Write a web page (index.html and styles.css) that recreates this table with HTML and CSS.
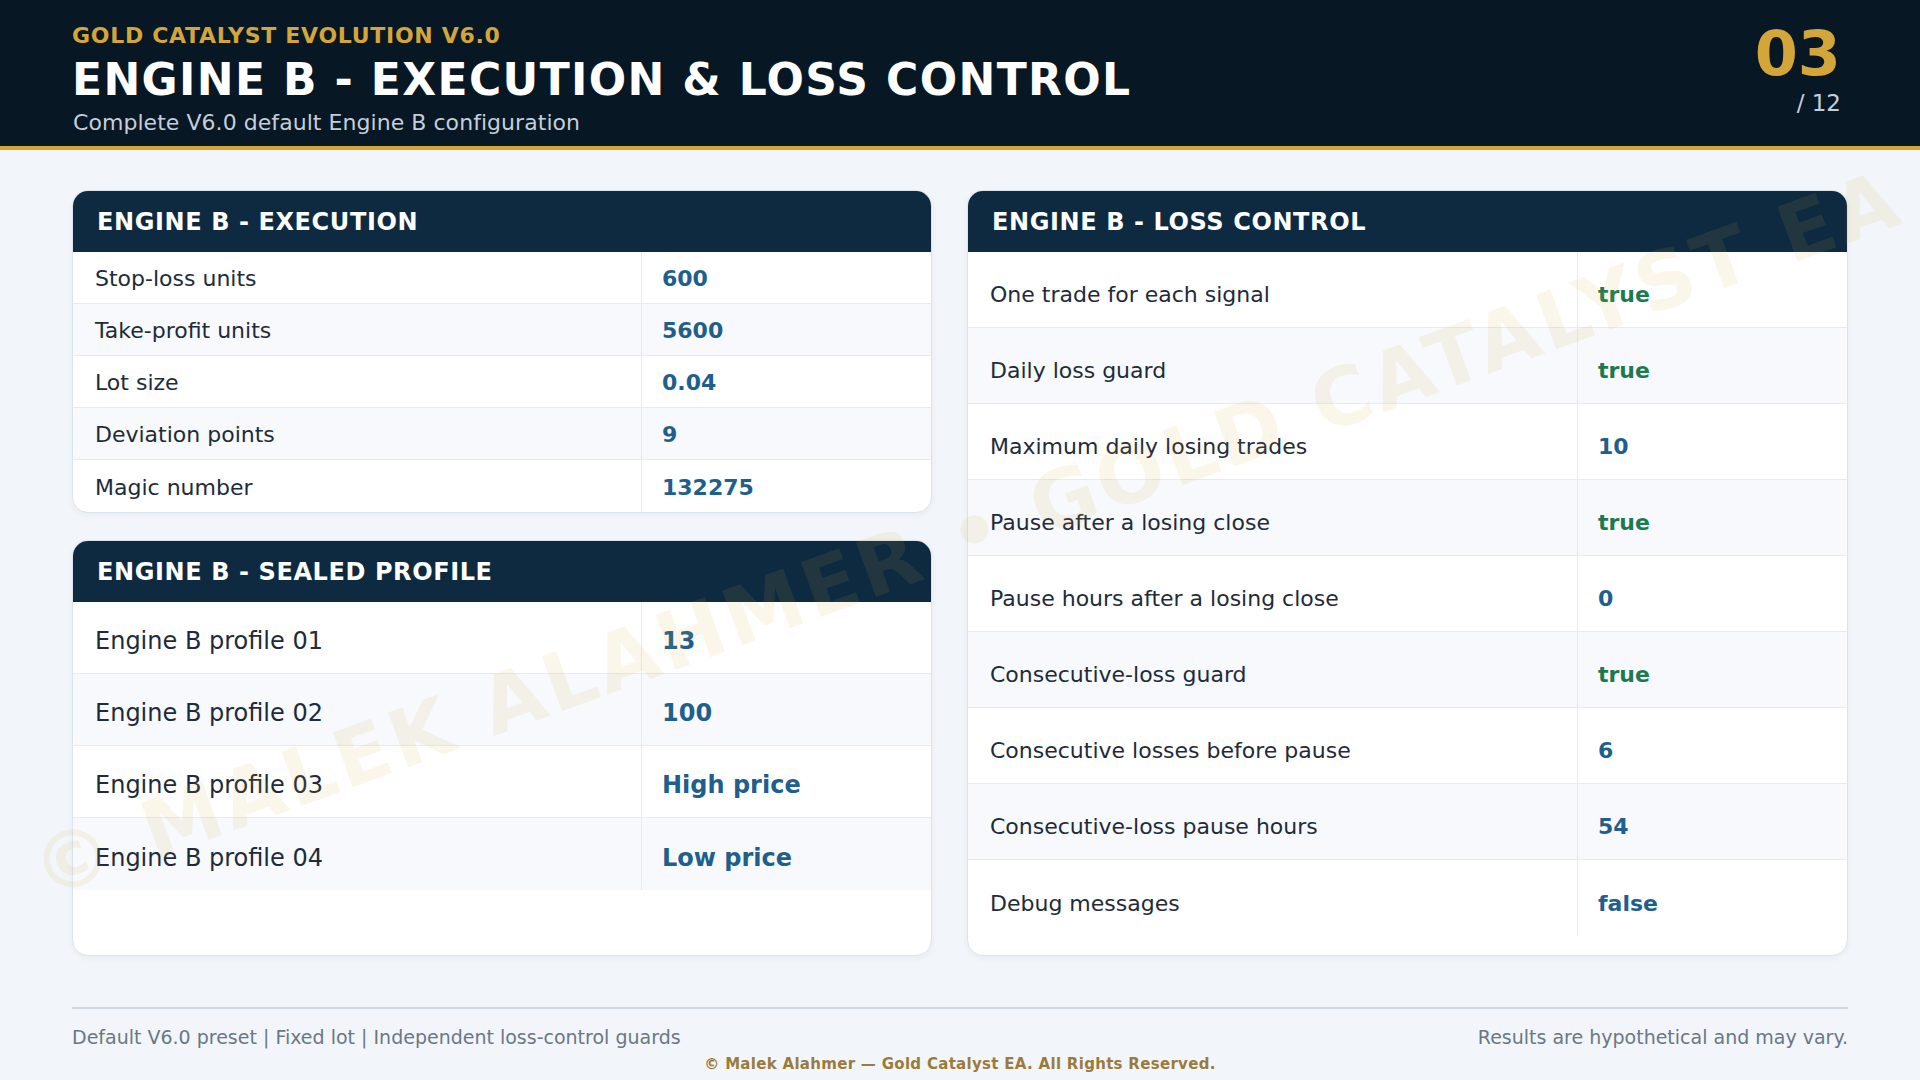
FILE: index.html
```html
<!DOCTYPE html>
<html lang="en">
<head>
<meta charset="utf-8">
<title>Engine B - Execution &amp; Loss Control</title>
<link rel="stylesheet" href="styles.css">
</head>
<body>
<header class="top">
  <div class="titles">
    <div class="eyebrow">GOLD CATALYST EVOLUTION V6.0</div>
    <h1 class="title">ENGINE B - EXECUTION &amp; LOSS CONTROL</h1>
    <div class="subtitle">Complete V6.0 default Engine B configuration</div>
  </div>
  <div class="pager">
    <div class="page-num">03</div>
    <div class="page-total">/ 12</div>
  </div>
</header>

<main class="grid">
  <div class="col">
    <section class="card">
      <h2 class="card-head">ENGINE B - EXECUTION</h2>
      <div class="rows rows-exec">
        <div class="row"><span class="k">Stop-loss units</span><span class="v">600</span></div>
        <div class="row"><span class="k">Take-profit units</span><span class="v">5600</span></div>
        <div class="row"><span class="k">Lot size</span><span class="v">0.04</span></div>
        <div class="row"><span class="k">Deviation points</span><span class="v">9</span></div>
        <div class="row"><span class="k">Magic number</span><span class="v">132275</span></div>
      </div>
    </section>
    <section class="card card-fill">
      <h2 class="card-head">ENGINE B - SEALED PROFILE</h2>
      <div class="rows rows-profile">
        <div class="row"><span class="k">Engine B profile 01</span><span class="v">13</span></div>
        <div class="row"><span class="k">Engine B profile 02</span><span class="v">100</span></div>
        <div class="row"><span class="k">Engine B profile 03</span><span class="v">High price</span></div>
        <div class="row"><span class="k">Engine B profile 04</span><span class="v">Low price</span></div>
      </div>
    </section>
  </div>

  <section class="card">
    <h2 class="card-head">ENGINE B - LOSS CONTROL</h2>
    <div class="rows rows-loss">
      <div class="row"><span class="k">One trade for each signal</span><span class="v v-true">true</span></div>
      <div class="row"><span class="k">Daily loss guard</span><span class="v v-true">true</span></div>
      <div class="row"><span class="k">Maximum daily losing trades</span><span class="v">10</span></div>
      <div class="row"><span class="k">Pause after a losing close</span><span class="v v-true">true</span></div>
      <div class="row"><span class="k">Pause hours after a losing close</span><span class="v">0</span></div>
      <div class="row"><span class="k">Consecutive-loss guard</span><span class="v v-true">true</span></div>
      <div class="row"><span class="k">Consecutive losses before pause</span><span class="v">6</span></div>
      <div class="row"><span class="k">Consecutive-loss pause hours</span><span class="v">54</span></div>
      <div class="row"><span class="k">Debug messages</span><span class="v">false</span></div>
    </div>
  </section>
</main>

<footer class="foot">
  <div class="foot-row">
    <span>Default V6.0 preset | Fixed lot | Independent loss-control guards</span>
    <span>Results are hypothetical and may vary.</span>
  </div>
  <div class="copyright">© Malek Alahmer — Gold Catalyst EA. All Rights Reserved.</div>
</footer>

<div class="watermark">© MALEK ALAHMER • GOLD CATALYST EA</div>
</body>
</html>
```

FILE: styles.css
```css
* { box-sizing: border-box; }

html, body {
  margin: 0;
  padding: 0;
}

body {
  width: 1920px;
  height: 1080px;
  overflow: hidden;
  background: #f2f6fa;
  font-family: "DejaVu Sans", "Noto Sans", sans-serif;
  color: #1e2b3a;
  position: relative;
}

/* ---------- top header ---------- */
.top {
  height: 150px;
  background: #071724;
  border-bottom: 4px solid #d4a63a;
  display: flex;
  justify-content: space-between;
  padding: 0 79px 0 72px;
}

.titles {
  padding-top: 23px;
}

.eyebrow {
  font-size: 22px;
  line-height: 26px;
  font-weight: bold;
  color: #d4a63a;
  letter-spacing: 0.7px;
  margin-bottom: 5px;
}

.title {
  margin: 0;
  font-size: 44px;
  line-height: 52px;
  font-weight: bold;
  color: #ffffff;
  letter-spacing: 1.35px;
}

.subtitle {
  margin-top: 4px;
  font-size: 22px;
  line-height: 26px;
  color: #c5ced9;
  letter-spacing: 0.05px;
  padding-left: 1px;
}

.pager {
  padding-top: 23px;
  display: flex;
  flex-direction: column;
  align-items: flex-end;
}

.page-num {
  font-size: 62px;
  line-height: 62px;
  font-weight: bold;
  color: #d4a63a;
}

.page-total {
  margin-top: 5px;
  font-size: 23px;
  line-height: 26px;
  color: #c5ced9;
}

/* ---------- grid ---------- */
.grid {
  display: grid;
  grid-template-columns: 860px 1fr;
  column-gap: 35px;
  height: 806px;
  padding: 40px 72px 0;
}

.col {
  display: flex;
  flex-direction: column;
  gap: 27px;
}

.card {
  background: #ffffff;
  border: 1px solid #dbe3ec;
  border-radius: 16px;
  overflow: hidden;
  box-shadow: 0 2px 6px rgba(15, 40, 70, 0.05);
}

.card-fill {
  flex: 1;
}

.card-head {
  margin: 0;
  height: 61px;
  display: flex;
  align-items: center;
  padding: 0 24px;
  background: #0d2a40;
  color: #ffffff;
  font-size: 24px;
  font-weight: bold;
  letter-spacing: 0.6px;
}

.row {
  display: grid;
  border-bottom: 1px solid #e5ebf2;
}

.row:nth-child(even) {
  background: #f7f9fc;
}

.row:last-child {
  border-bottom: none;
}

.k, .v {
  display: flex;
  align-items: center;
}

.k {
  padding: 0 22px;
  border-right: 1px solid #e5ebf2;
  color: #1e2b3a;
}

.v {
  padding: 0 20px;
  font-weight: bold;
  color: #1f5f8d;
}

.v-true {
  color: #1d7a50;
}

.rows-exec .row {
  grid-template-columns: 569px 1fr;
  height: 52px;
  font-size: 22px;
}

.rows-exec .k,
.rows-exec .v {
  padding-top: 2px;
}

.rows-profile .row {
  grid-template-columns: 569px 1fr;
  height: 72px;
  font-size: 24px;
}

.rows-profile .k,
.rows-profile .v {
  padding-top: 7px;
}

.rows-loss .row {
  grid-template-columns: 610px 1fr;
  height: 76px;
  font-size: 22px;
}

.rows-loss .k,
.rows-loss .v {
  padding-top: 10px;
}

/* ---------- footer ---------- */
.foot {
  margin: 51px 72px 0;
  border-top: 2px solid #d0d9e3;
}

.foot-row {
  display: flex;
  justify-content: space-between;
  padding-top: 17px;
  font-size: 19px;
  line-height: 22px;
  color: #6b7785;
}

.copyright {
  margin-top: 7px;
  text-align: center;
  font-size: 15px;
  line-height: 18px;
  font-weight: bold;
  letter-spacing: 0.3px;
  color: #9b7b3b;
}

/* ---------- watermark ---------- */
.watermark {
  position: absolute;
  left: calc(50% + 7px);
  top: calc(50% - 5px);
  transform: translate(-50%, -50%) rotate(-20deg);
  font-size: 80px;
  line-height: 1;
  font-weight: bold;
  letter-spacing: 4px;
  white-space: nowrap;
  color: rgba(218, 168, 50, 0.1);
  pointer-events: none;
  z-index: 10;
}
```
